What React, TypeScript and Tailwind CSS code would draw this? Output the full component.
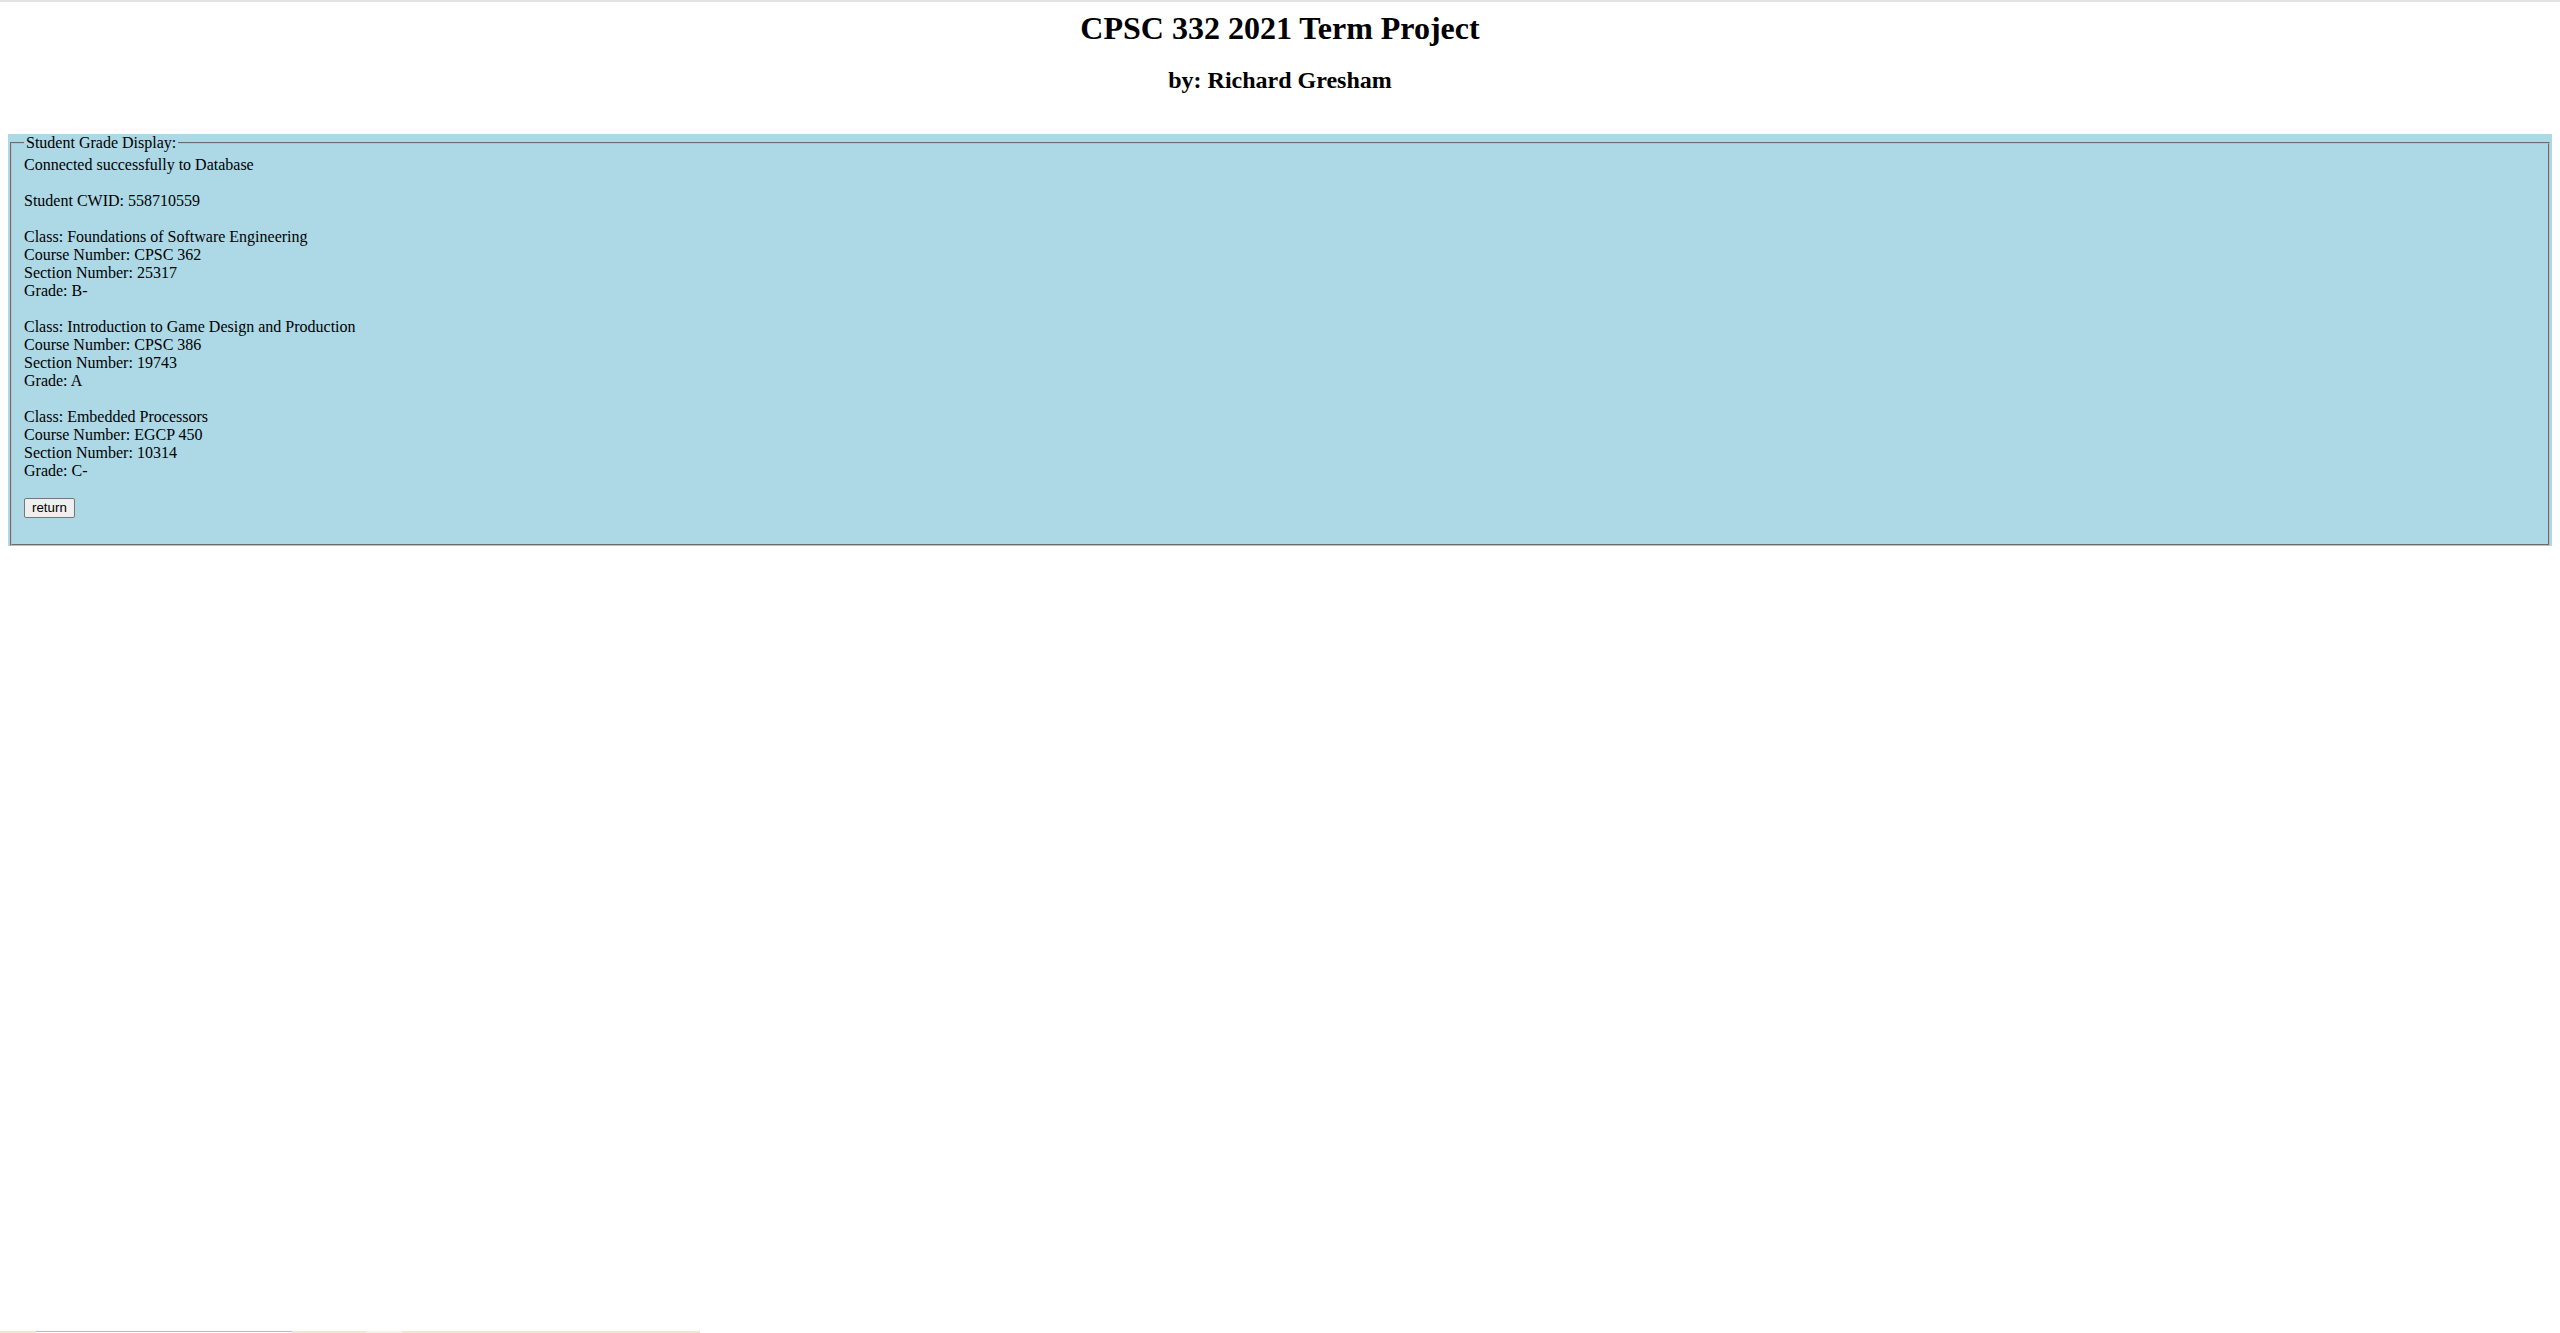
export default function App() {
  const classes = [
    { name: "Foundations of Software Engineering", course: "CPSC 362", section: "25317", grade: "B-" },
    { name: "Introduction to Game Design and Production", course: "CPSC 386", section: "19743", grade: "A" },
    { name: "Embedded Processors", course: "EGCP 450", section: "10314", grade: "C-" },
  ];

  return (
    <div className="min-h-screen flex flex-col bg-white text-black font-['Liberation_Serif',serif] border-t-2 border-[#e2e2e2]">
      <div className="px-2">
        <h1 className="text-center text-[32px] leading-[37px] font-bold pt-[8px]">CPSC 332 2021 Term Project</h1>
        <h2 className="text-center text-[24px] leading-[28px] font-bold mt-[19px]">by: Richard Gresham</h2>

        <div className="bg-[#add8e6] mt-[40px]">
          <fieldset className="mx-[2px] border-2 [border-style:groove] border-[#c0c0c0] px-3 pt-[4px] pb-[26px] text-[16px] leading-[18px]">
            <legend className="px-[2px]">Student Grade Display:</legend>
            Connected successfully to Database
            <br />
            <br />
            Student CWID: 558710559
            <br />
            {classes.map((c) => (
              <div key={c.course}>
                <br />
                Class: {c.name}
                <br />
                Course Number: {c.course}
                <br />
                Section Number: {c.section}
                <br />
                Grade: {c.grade}
                <br />
              </div>
            ))}
            <br />
            <button className="font-['Liberation_Sans',sans-serif] text-[13.33px] leading-[16px] px-[7px] py-[1px] bg-[#efefef] border border-[#767676] rounded-[2px]">
              return
            </button>
          </fieldset>
        </div>
      </div>

      {/* bottom strip from the captured screen */}
      <div className="mt-auto flex h-[2px]">
        <div className="w-[36px] bg-[#efe7d4]" />
        <div className="w-[256px] bg-white border-t border-[#b8b8b8]" />
        <div className="w-[74px] bg-[#efe7d4]" />
        <div className="w-[36px] bg-[#f7f2e8]" />
        <div className="w-[298px] bg-[#efe7d4]" />
      </div>
    </div>
  );
}
